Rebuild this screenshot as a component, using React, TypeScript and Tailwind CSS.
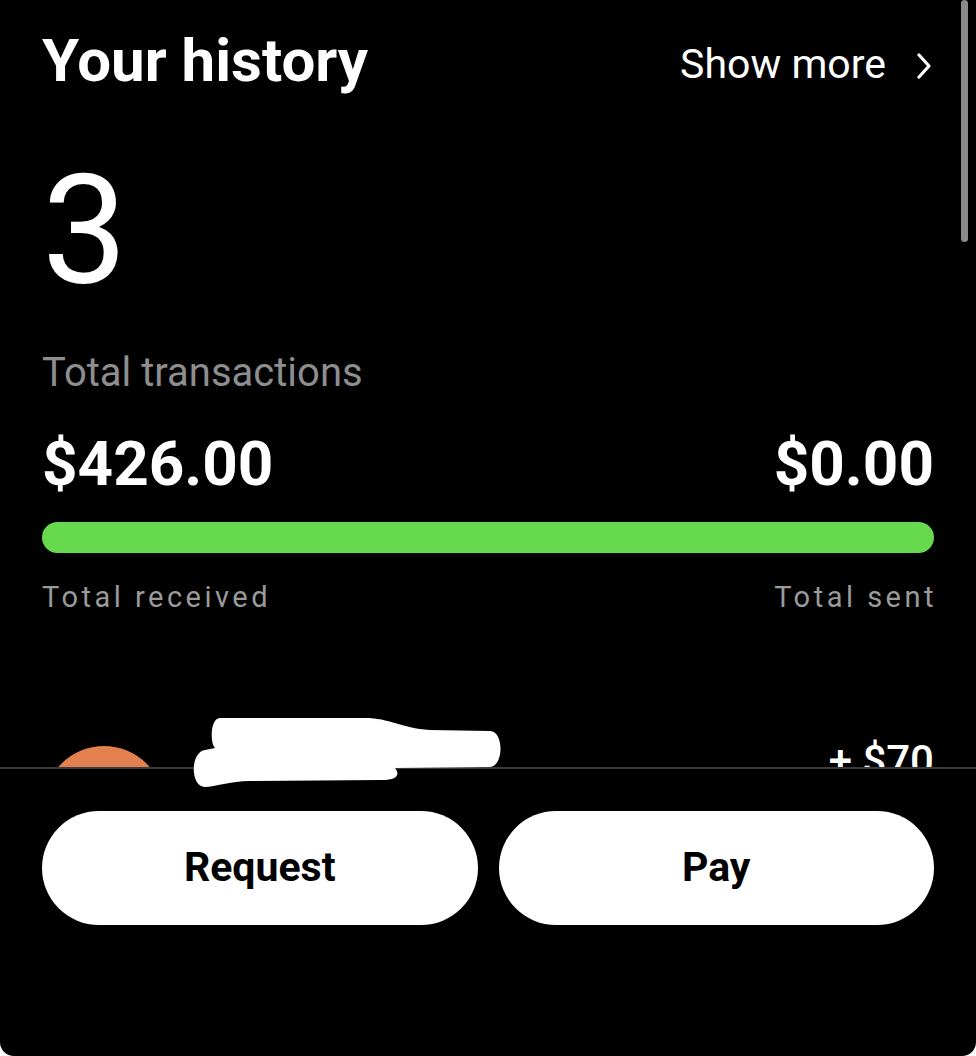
import React from "react";

export default function App() {
  const font = { fontFamily: "Roboto, 'Liberation Sans', sans-serif" };
  return (
    <div className="relative h-[1056px] w-full bg-white" style={font}>
      <div className="flex h-full flex-col overflow-hidden rounded-b-[14px] bg-black">
        <div className="h-[767px] shrink-0 overflow-hidden px-[42px] pt-[31px]">
          <div className="flex items-start justify-between">
            <h1 className="text-[60px] font-bold leading-none text-white">
              Your history
            </h1>
            <div className="mt-[13px] flex items-center gap-[30px] text-white">
              <span className="text-[41px] leading-none">Show more</span>
              <svg width="16" height="26" viewBox="0 0 16 26" className="mr-[2px] mt-[2px]">
                <polyline points="3,2 13,13 3,24" fill="none" stroke="white" strokeWidth="3.2" strokeLinecap="round" strokeLinejoin="round" />
              </svg>
            </div>
          </div>
          <div className="mt-[64px] text-[152px] font-normal leading-none text-white">3</div>
          <div className="mt-[46px] text-[40px] leading-none text-[#8e8e8e]">Total transactions</div>
          <div className="mt-[40px] flex items-start justify-between text-[62px] font-bold leading-none text-white">
            <span>$426.00</span>
            <span>$0.00</span>
          </div>
          <div className="mt-[27px] h-[31px] w-full rounded-full bg-[#66d94f]" />
          <div className="mt-[30px] flex justify-between text-[29px] leading-none tracking-[3.5px] text-[#9a9a9a]">
            <span>Total received</span>
            <span className="mr-[-3px]">Total sent</span>
          </div>
          <div className="mt-[128px] flex items-start justify-between">
            <div className="ml-[2px] mt-[6px] h-[120px] w-[120px] rounded-full bg-[#e2804f]" />
            <span className="text-[42px] font-medium leading-none text-white">+ $70</span>
          </div>
        </div>
        <div className="flex flex-1 gap-[21px] border-t-2 border-[#3a3a3a] px-[42px] pt-[42px]">
          <button className="flex h-[114px] flex-1 items-center justify-center rounded-full bg-white text-[41px] font-bold text-black">
            Request
          </button>
          <button className="flex h-[114px] flex-1 items-center justify-center rounded-full bg-white text-[41px] font-bold text-black">
            Pay
          </button>
        </div>
      </div>
      <div className="absolute right-[8px] top-0 h-[242px] w-[7px] rounded-full bg-[#8a8a8a]" />
      <svg className="absolute left-[190px] top-[714px]" width="316" height="76" viewBox="0 0 316 76">
        <path
          d="M 30 4 L 175 4 C 200 4, 210 14, 240 16 L 300 17 C 314 17, 314 52, 300 53 L 205 54 C 210 60, 208 66, 192 66 L 60 67 C 40 67, 25 73, 15 73 C 0 73, 0 38, 15 36 L 25 34 C 20 30, 20 4, 30 4 Z"
          fill="white"
        />
      </svg>
    </div>
  );
}
